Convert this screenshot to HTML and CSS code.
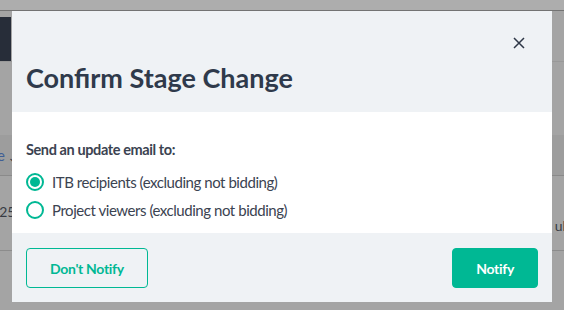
FILE: index.html
```html
<!DOCTYPE html>
<html>
<head>
  <meta charset="utf-8">
  <meta name="viewport" content="width=device-width, initial-scale=1">
  <title>Confirm Stage Change</title>
  <link rel="stylesheet" href="styles.css">
</head>
<body>

<div class="page">
  <div class="topbar"></div>
  <div class="navbar"><div class="nav-brand"></div></div>
  <div class="table">
    <div class="thead"><span class="sort"><span class="sort-link">e</span> &darr;</span></div>
    <div class="trow"><span class="cell-date">2025</span><span class="cell-status">ubmitted</span></div>
  </div>
</div>

<div class="overlay">
  <div class="modal" role="dialog">

    <div class="modal-header">
      <div class="close-row">
        <button type="button" class="close-btn" aria-label="Close">
          <svg width="12" height="12" viewBox="0 0 12 12">
            <path d="M1 1 L11 11 M11 1 L1 11" stroke="#2e3747" stroke-width="1.5" fill="none"/>
          </svg>
        </button>
      </div>
      <h2 class="modal-title">Confirm Stage Change</h2>
    </div>

    <div class="modal-body">
      <p class="question">Send an update email to:</p>
      <label class="radio-item">
        <input type="radio" name="recipients" value="itb" checked>
        <span class="radio-mark"></span>
        ITB recipients (excluding not bidding)
      </label>
      <label class="radio-item">
        <input type="radio" name="recipients" value="viewers">
        <span class="radio-mark"></span>
        Project viewers (excluding not bidding)
      </label>
    </div>

    <div class="modal-footer">
      <button type="button" class="btn btn-outline">Don't Notify</button>
      <button type="button" class="btn btn-primary">Notify</button>
    </div>

  </div>
</div>

</body>
</html>
```

FILE: styles.css
```css
html, body {
  margin: 0;
  height: 100%;
  overflow: hidden;
}

body {
  font-family: Lato, "Open Sans", sans-serif;
  background-color: #a4a4a4;
  color: #3b4351;
}

/* dimmed page behind the dialog */
.page {
  height: 100%;
}

.topbar {
  height: 10px;
  background-color: #adadad;
  border-bottom: 1px solid #737373;
}

.navbar {
  margin-top: 6px;
  height: 44px;
  border-bottom: 1px solid #999999;
}

.nav-brand {
  width: 11px;
  height: 100%;
  background-color: #272d39;
}

.table {
  margin-top: 73px;
}

.thead {
  height: 40px;
  display: flex;
  align-items: center;
  background-color: #9d9d9d;
  border-bottom: 1px solid #8a8a8a;
  font-size: 15px;
}

.sort {
  margin-left: -3px;
  color: #2e323a;
}

.sort-link {
  color: #3f5f95;
}

.trow {
  height: 74px;
  display: flex;
  justify-content: space-between;
  border-bottom: 1px solid #8c8c8c;
  font-size: 14px;
  color: #383c44;
}

.cell-date {
  margin-top: 27px;
  margin-left: -17px;
}

.cell-status {
  margin-top: 41px;
  margin-right: -46px;
}

/* dialog */
.overlay {
  position: fixed;
  inset: 0;
}

.modal {
  position: absolute;
  left: 12px;
  top: 11px;
  width: 540px;
  display: flex;
  flex-direction: column;
  background-color: #ffffff;
}

.modal-header {
  background-color: #eff2f5;
  padding: 20px 14px 18px;
}

.close-row {
  display: flex;
  justify-content: flex-end;
}

.close-btn {
  width: 24px;
  height: 24px;
  margin-right: 7px;
  padding: 0;
  border: none;
  background: none;
  display: flex;
  align-items: center;
  justify-content: center;
  cursor: pointer;
}

.modal-title {
  margin: 7px 0 0;
  font-size: 27px;
  line-height: 32px;
  font-weight: 700;
  color: #2f3a4b;
}

.modal-body {
  padding: 26px 14px 9px;
}

.question {
  margin: 0 0 6px;
  font-size: 14.5px;
  line-height: 24px;
  font-weight: 700;
  letter-spacing: -0.4px;
  color: #3b4351;
}

.radio-item {
  display: flex;
  align-items: center;
  height: 28px;
  font-size: 15px;
  letter-spacing: -0.45px;
  color: #3b4351;
  cursor: pointer;
}

.radio-item input {
  display: none;
}

.radio-mark {
  width: 14px;
  height: 14px;
  margin-right: 8px;
  border: 2px solid #00b894;
  border-radius: 50%;
  display: flex;
  align-items: center;
  justify-content: center;
  background-color: #ffffff;
}

.radio-item input:checked + .radio-mark::after {
  content: "";
  width: 10px;
  height: 10px;
  border-radius: 50%;
  background-color: #00b894;
}

.modal-footer {
  background-color: #eff2f5;
  padding: 15px 14px 14px;
  display: flex;
  justify-content: space-between;
}

.btn {
  height: 40px;
  padding: 0 23px;
  border-radius: 4px;
  font-family: inherit;
  font-size: 14px;
  font-weight: 700;
  letter-spacing: -0.3px;
  cursor: pointer;
}

.btn-outline {
  border: 1px solid #00b894;
  background-color: transparent;
  color: #00b894;
}

.btn-primary {
  border: 1px solid #00b894;
  background-color: #00b894;
  color: #ffffff;
}
```
